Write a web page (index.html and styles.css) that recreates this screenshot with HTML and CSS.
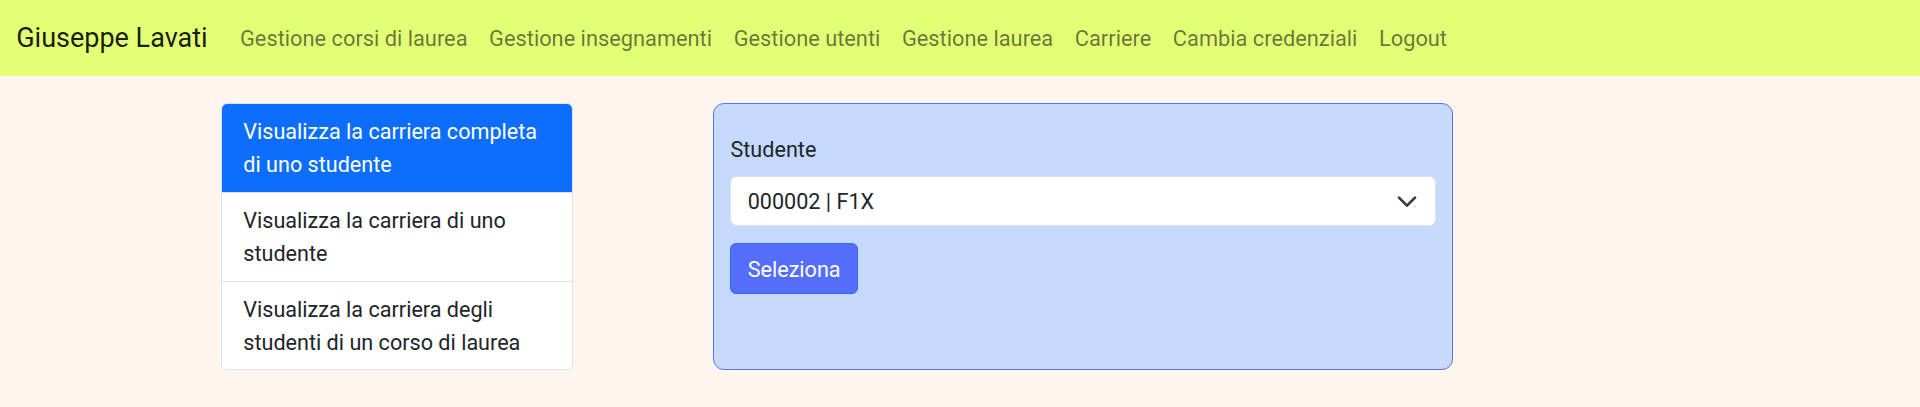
FILE: index.html
```html
<!DOCTYPE html>
<html lang="it">
<head>
<meta charset="utf-8">
<title>Carriere</title>
<link rel="stylesheet" href="styles.css">
</head>
<body>
<nav class="navbar">
  <a class="brand" href="#">Giuseppe Lavati</a>
  <ul class="nav">
    <li><a class="nav-link" href="#">Gestione corsi di laurea</a></li>
    <li><a class="nav-link" href="#">Gestione insegnamenti</a></li>
    <li><a class="nav-link" href="#">Gestione utenti</a></li>
    <li><a class="nav-link" href="#">Gestione laurea</a></li>
    <li><a class="nav-link" href="#">Carriere</a></li>
    <li><a class="nav-link" href="#">Cambia credenziali</a></li>
    <li><a class="nav-link" href="#">Logout</a></li>
  </ul>
</nav>
<main class="main">
  <div class="list-group">
    <a class="list-item active" href="#">Visualizza la carriera completa<br>di uno studente</a>
    <a class="list-item" href="#">Visualizza la carriera di uno<br>studente</a>
    <a class="list-item" href="#">Visualizza la carriera degli<br>studenti di un corso di laurea</a>
  </div>
  <form class="card">
    <label class="form-label">Studente</label>
    <div class="form-select">
      <span class="select-value">000002 | F1X</span>
      <svg class="chevron" width="22" height="16" viewBox="0 0 16 12" aria-hidden="true"><path d="M2 3.5l6 6 6-6" fill="none" stroke="#343a40" stroke-width="2" stroke-linecap="round" stroke-linejoin="round"/></svg>
    </div>
    <div class="actions">
      <button class="btn" type="button">Seleziona</button>
    </div>
  </form>
</main>
</body>
</html>
```
FILE: styles.css
```css
* { box-sizing: border-box; }
body {
  margin: 0;
  background: #fff5ef;
  font-family: Roboto, "Noto Sans", "Liberation Sans", sans-serif;
  font-size: 21.6px;
  line-height: 32.4px;
  color: #212529;
}
a { text-decoration: none; }

.navbar {
  display: flex;
  align-items: center;
  height: 75.6px;
  padding: 10.8px 16.2px;
  background: #e2ff76;
}
.brand {
  font-size: 27px;
  line-height: 40.5px;
  padding: 7.5px 0 6px;
  margin-right: 21.6px;
  color: rgba(0, 0, 0, 0.9);
}
.nav {
  display: flex;
  list-style: none;
  margin: 0;
  padding: 0;
}
.nav-link {
  display: block;
  font-size: 21.8px;
  padding: 11.8px 10.8px 9.8px;
  color: rgba(0, 0, 0, 0.55);
}

.main {
  display: flex;
  align-items: stretch;
  gap: 140px;
  padding: 27.4px 0 0 220.7px;
}

.list-group {
  width: 352.6px;
  display: flex;
  flex-direction: column;
  border: 1px solid #dee2e6;
  border-radius: 6px;
  overflow: hidden;
  background: #fff;
}
.list-item {
  display: block;
  padding: 12.5px 21.6px 10.5px;
  color: #212529;
  background: #fff;
  border-top: 1px solid #dee2e6;
}
.list-item:first-child { border-top: 0; }
.list-item.active {
  background: #0d6efd;
  color: #fff;
  margin: -1px -1px 0;
  padding: 13.5px 22.6px 10.5px;
}

.card {
  width: 739.5px;
  margin: 0;
  padding: 28.4px 16.2px 16px;
  background: #c6dafe;
  border: 1px solid #5a70fa;
  border-radius: 10.8px;
}
.form-label {
  display: block;
  padding-top: 1.5px;
  margin-bottom: 9.3px;
}
.form-select {
  display: flex;
  align-items: center;
  justify-content: space-between;
  height: 50.6px;
  padding: 0 16.2px;
  background: #fff;
  border: 1px solid #dee2e6;
  border-radius: 6.5px;
  margin-bottom: 17px;
}
.select-value { padding-top: 2px; }
.chevron { display: block; }
.actions { display: flex; }
.btn {
  font: inherit;
  line-height: 32.4px;
  padding: 9.6px 16.2px 6.6px;
  color: #fff;
  background: #546dfb;
  border: 1px solid #2f6cf4;
  border-radius: 6px;
}
```
